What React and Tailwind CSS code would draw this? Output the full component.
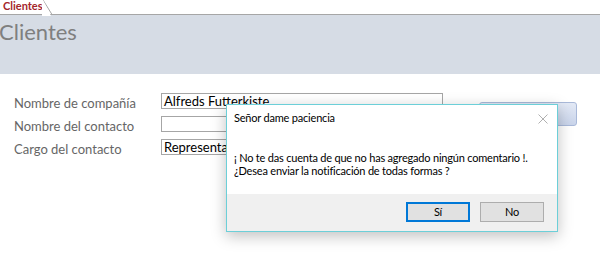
export default function App() {
  return (
    <div className="relative w-[600px] h-[255px] overflow-hidden bg-white" style={{ fontFamily: '"Open Sans", sans-serif' }}>
      {/* tab bar */}
      <div className="h-[15px] flex items-end border-b border-[#a6a6a6] bg-white relative">
        <div className="h-[15px] pl-[3px] pr-[10px] bg-white text-[11px] leading-[13px] font-bold text-[#a4262c] flex items-start relative z-10" style={{ fontFamily: 'Lato, sans-serif' }}>
          Clientes
        </div>
        <svg className="absolute left-[42px] top-0 z-20" width="14" height="16" viewBox="0 0 14 16">
          <rect x="0" y="0" width="4" height="16" fill="#fff" />
          <path d="M1 0 L10 14.5 L14 14.5" stroke="#a6a6a6" strokeWidth="1" fill="none" />
          <path d="M0 0 L0 16 L9 16 L1 0 Z" fill="#fff" />
        </svg>
      </div>
      {/* header */}
      <div className="h-[59px] bg-[#d6dce5] pt-[2px]">
        <div className="text-[22px] leading-[30px] text-[#7f7f7f] -ml-[1px]" style={{ fontFamily: 'Lato, sans-serif' }}>Clientes</div>
      </div>
      {/* form */}
      <div className="flex pt-[19px]">
        <div className="flex flex-col gap-[7px] pl-[14px]" style={{ fontFamily: 'Lato, sans-serif' }}>
          {[
            ['Nombre de compañía', 'Alfreds Futterkiste'],
            ['Nombre del contacto', ''],
            ['Cargo del contacto', 'Representante de ventas'],
          ].map(([l, v]) => (
            <div key={l} className="flex items-center h-[16px]">
              <div className="w-[147px] text-[13px] leading-[16px] pt-[3px] text-[#666666]">{l}</div>
              <div className="w-[282px] h-[16px] border border-[#a6a6a6] text-[13px] leading-[14px] text-black pl-[2px] overflow-hidden whitespace-nowrap">{v}</div>
            </div>
          ))}
        </div>
        <div className="ml-[36px] mt-[9px] w-[98px] h-[24px] rounded-[3px] border border-[#a9b9d9] bg-gradient-to-b from-[#e3e9f5] to-[#c9d4ea]"></div>
      </div>
      {/* dialog */}
      <div className="absolute left-[226px] top-[104px] w-[332px] h-[128px] bg-white border border-[#6ccfd8] shadow-[0_4px_14px_rgba(0,0,0,0.25)] flex flex-col tracking-[-0.2px]" style={{ fontFamily: 'Lato, sans-serif' }}>
        <div className="flex items-center justify-between h-[27px] pl-[7px] pr-[9px]">
          <div className="text-[11px] text-black">Señor dame paciencia</div>
          <svg width="10" height="10" viewBox="0 0 10 10"><path d="M0.5 0.5 L9.5 9.5 M9.5 0.5 L0.5 9.5" stroke="#b0b0b0" strokeWidth="1" /></svg>
        </div>
        <div className="flex-1 pt-[19px] pl-[7px] text-[11px] leading-[13px] text-black whitespace-nowrap">
          <div>¡ No te das cuenta de que no has agregado ningún comentario !.</div>
          <div>¿Desea enviar la notificación de todas formas ?</div>
        </div>
        <div className="h-[37px] bg-[#f0f0f0] flex items-center justify-end gap-[10px] pr-[13px] pb-[1px]">
          <button className="w-[64px] h-[20px] bg-[#e1e1e1] border-2 border-[#0078d7] text-[11px] leading-[14px] text-black">Sí</button>
          <button className="w-[64px] h-[20px] bg-[#e1e1e1] border border-[#adadad] text-[11px] leading-[14px] text-black">No</button>
        </div>
      </div>
    </div>
  );
}
